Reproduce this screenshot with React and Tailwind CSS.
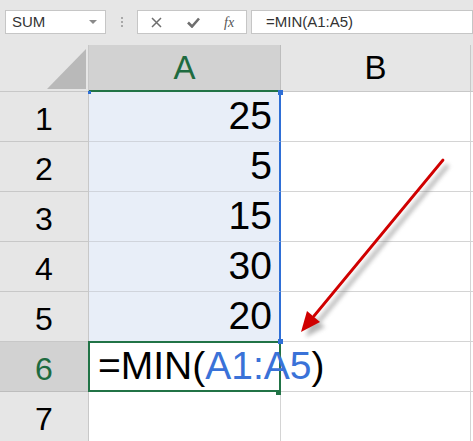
import React from "react";

const font = { fontFamily: '"Liberation Sans", Arial, sans-serif' };

function Arrow() {
  return (
    <svg className="absolute left-0 top-0 pointer-events-none" width="473" height="441" viewBox="0 0 473 441">
      <defs>
        <filter id="blur" x="-20%" y="-20%" width="140%" height="140%">
          <feGaussianBlur stdDeviation="2" />
        </filter>
      </defs>
      <g filter="url(#blur)" opacity="0.55" transform="translate(5 5)">
        <line x1="443" y1="160" x2="314" y2="316" stroke="#7a7a7a" strokeWidth="4" />
        <polygon points="301,332 320,322 307,311" fill="#7a7a7a" />
      </g>
      <line x1="443" y1="160" x2="314" y2="316" stroke="#d00000" strokeWidth="2.8" strokeLinecap="round" />
      <polygon points="301,332 320,322 307,311" fill="#d00000" />
    </svg>
  );
}

export default function App() {
  const values = [25, 5, 15, 30, 20];
  return (
    <div className="relative w-[473px] h-[441px] overflow-hidden bg-white" style={font}>
      {/* toolbar */}
      <div className="h-[45px] bg-[#e6e6e6] flex items-start pt-[10px] pl-[5px]">
        <div className="w-[101px] h-[24px] bg-white border border-[#c6c6c6] flex items-center justify-between pl-[6px] pr-[8px]">
          <span className="text-[15px] text-[#333]">SUM</span>
          <span className="w-0 h-0 border-l-[4px] border-r-[4px] border-t-[4px] border-l-transparent border-r-transparent border-t-[#8a8a8a]" />
        </div>
        <div className="w-[31px] h-[24px] flex flex-col items-center justify-center gap-[2px]">
          <span className="w-[2px] h-[2px] bg-[#a8a8a8]" />
          <span className="w-[2px] h-[2px] bg-[#a8a8a8]" />
          <span className="w-[2px] h-[2px] bg-[#a8a8a8]" />
        </div>
        <div className="w-[110px] h-[24px] bg-white border border-[#c6c6c6] flex items-center">
          <svg className="ml-[13px]" width="11" height="11" viewBox="0 0 11 11">
            <path d="M1 1 L10 10 M10 1 L1 10" stroke="#6e6e6e" strokeWidth="1.5" />
          </svg>
          <svg className="ml-[25px]" width="13" height="11" viewBox="0 0 13 11">
            <path d="M1 5.5 L5 9.5 L12 1.5" stroke="#6e6e6e" strokeWidth="2.6" fill="none" />
          </svg>
          <span className="ml-[24px] text-[14px] italic text-[#555]" style={{ fontFamily: '"Liberation Serif", serif' }}>fx</span>
        </div>
        <div className="ml-[4px] flex-1 h-[24px] bg-white border border-[#c6c6c6] flex items-center pl-[14px]">
          <span className="text-[15px] text-[#333]">=MIN(A1:A5)</span>
        </div>
      </div>

      {/* sheet */}
      <div className="grid grid-cols-[89px_192px_190px_1fr] grid-rows-[47px_repeat(7,50px)]">
        <div className="relative bg-[#e6e6e6] border-r border-b border-[#c8c8c8]">
          <div className="absolute left-[47px] top-[4px] w-0 h-0 border-l-[39px] border-b-[40px] border-l-transparent border-b-[#b9b9b9]" />
        </div>
        <div className="bg-[#d2d2d2] border-r border-[#bdbdbd] border-b-2 border-b-[#217346] flex items-center justify-center text-[33px] text-[#1e6b40]">A</div>
        <div className="bg-[#e6e6e6] border-r border-b border-[#c8c8c8] flex items-center justify-center text-[33px] text-black">B</div>
        <div className="bg-[#e6e6e6] border-b border-[#c8c8c8]" />

        {[1, 2, 3, 4, 5, 6, 7].map((r) => {
          const sel = r === 6;
          return (
            <React.Fragment key={r}>
              <div
                className={
                  sel
                    ? "bg-[#d2d2d2] border-b border-r border-[#bdbdbd] flex items-center justify-center pt-[4px] text-[32px] text-[#1e6b40]"
                    : "bg-[#e6e6e6] border-b border-r border-[#c8c8c8] flex items-center justify-center pt-[4px] text-[32px] text-black"
                }
              >
                {r}
              </div>
              {r <= 5 ? (
                <div className="bg-[#e8eef8] border-b border-[#d0d4dc] border-r-2 border-r-[#2f6fd6] flex items-center justify-end pr-[7px] text-[39px] text-black">
                  {values[r - 1]}
                </div>
              ) : r === 6 ? (
                <div className="relative z-10 -ml-px border-2 border-[#217346] flex items-center pl-[8px] text-[39px] text-black whitespace-nowrap -mt-px">
                  <span>
                    =MIN(<span className="text-[#3a72d8]">A1:A5</span>)
                  </span>
                </div>
              ) : (
                <div className="bg-white border-b border-r border-[#d4d4d4]" />
              )}
              <div className="bg-white border-b border-r border-[#d4d4d4]" />
              <div className="bg-white border-b border-[#d4d4d4]" />
            </React.Fragment>
          );
        })}
      </div>

      {/* selection handles */}
      <div className="absolute left-[88px] top-[91px] w-[3px] h-[3px] bg-[#2f6fd6]" />
      <div className="absolute left-[278px] top-[90px] w-[5px] h-[5px] bg-[#2f6fd6]" />
      <div className="absolute left-[278px] top-[339px] w-[5px] h-[5px] bg-[#2f6fd6] z-20" />
      <div className="absolute left-[276px] top-[390px] w-[5px] h-[5px] bg-[#217346] z-20" />

      <Arrow />
    </div>
  );
}
